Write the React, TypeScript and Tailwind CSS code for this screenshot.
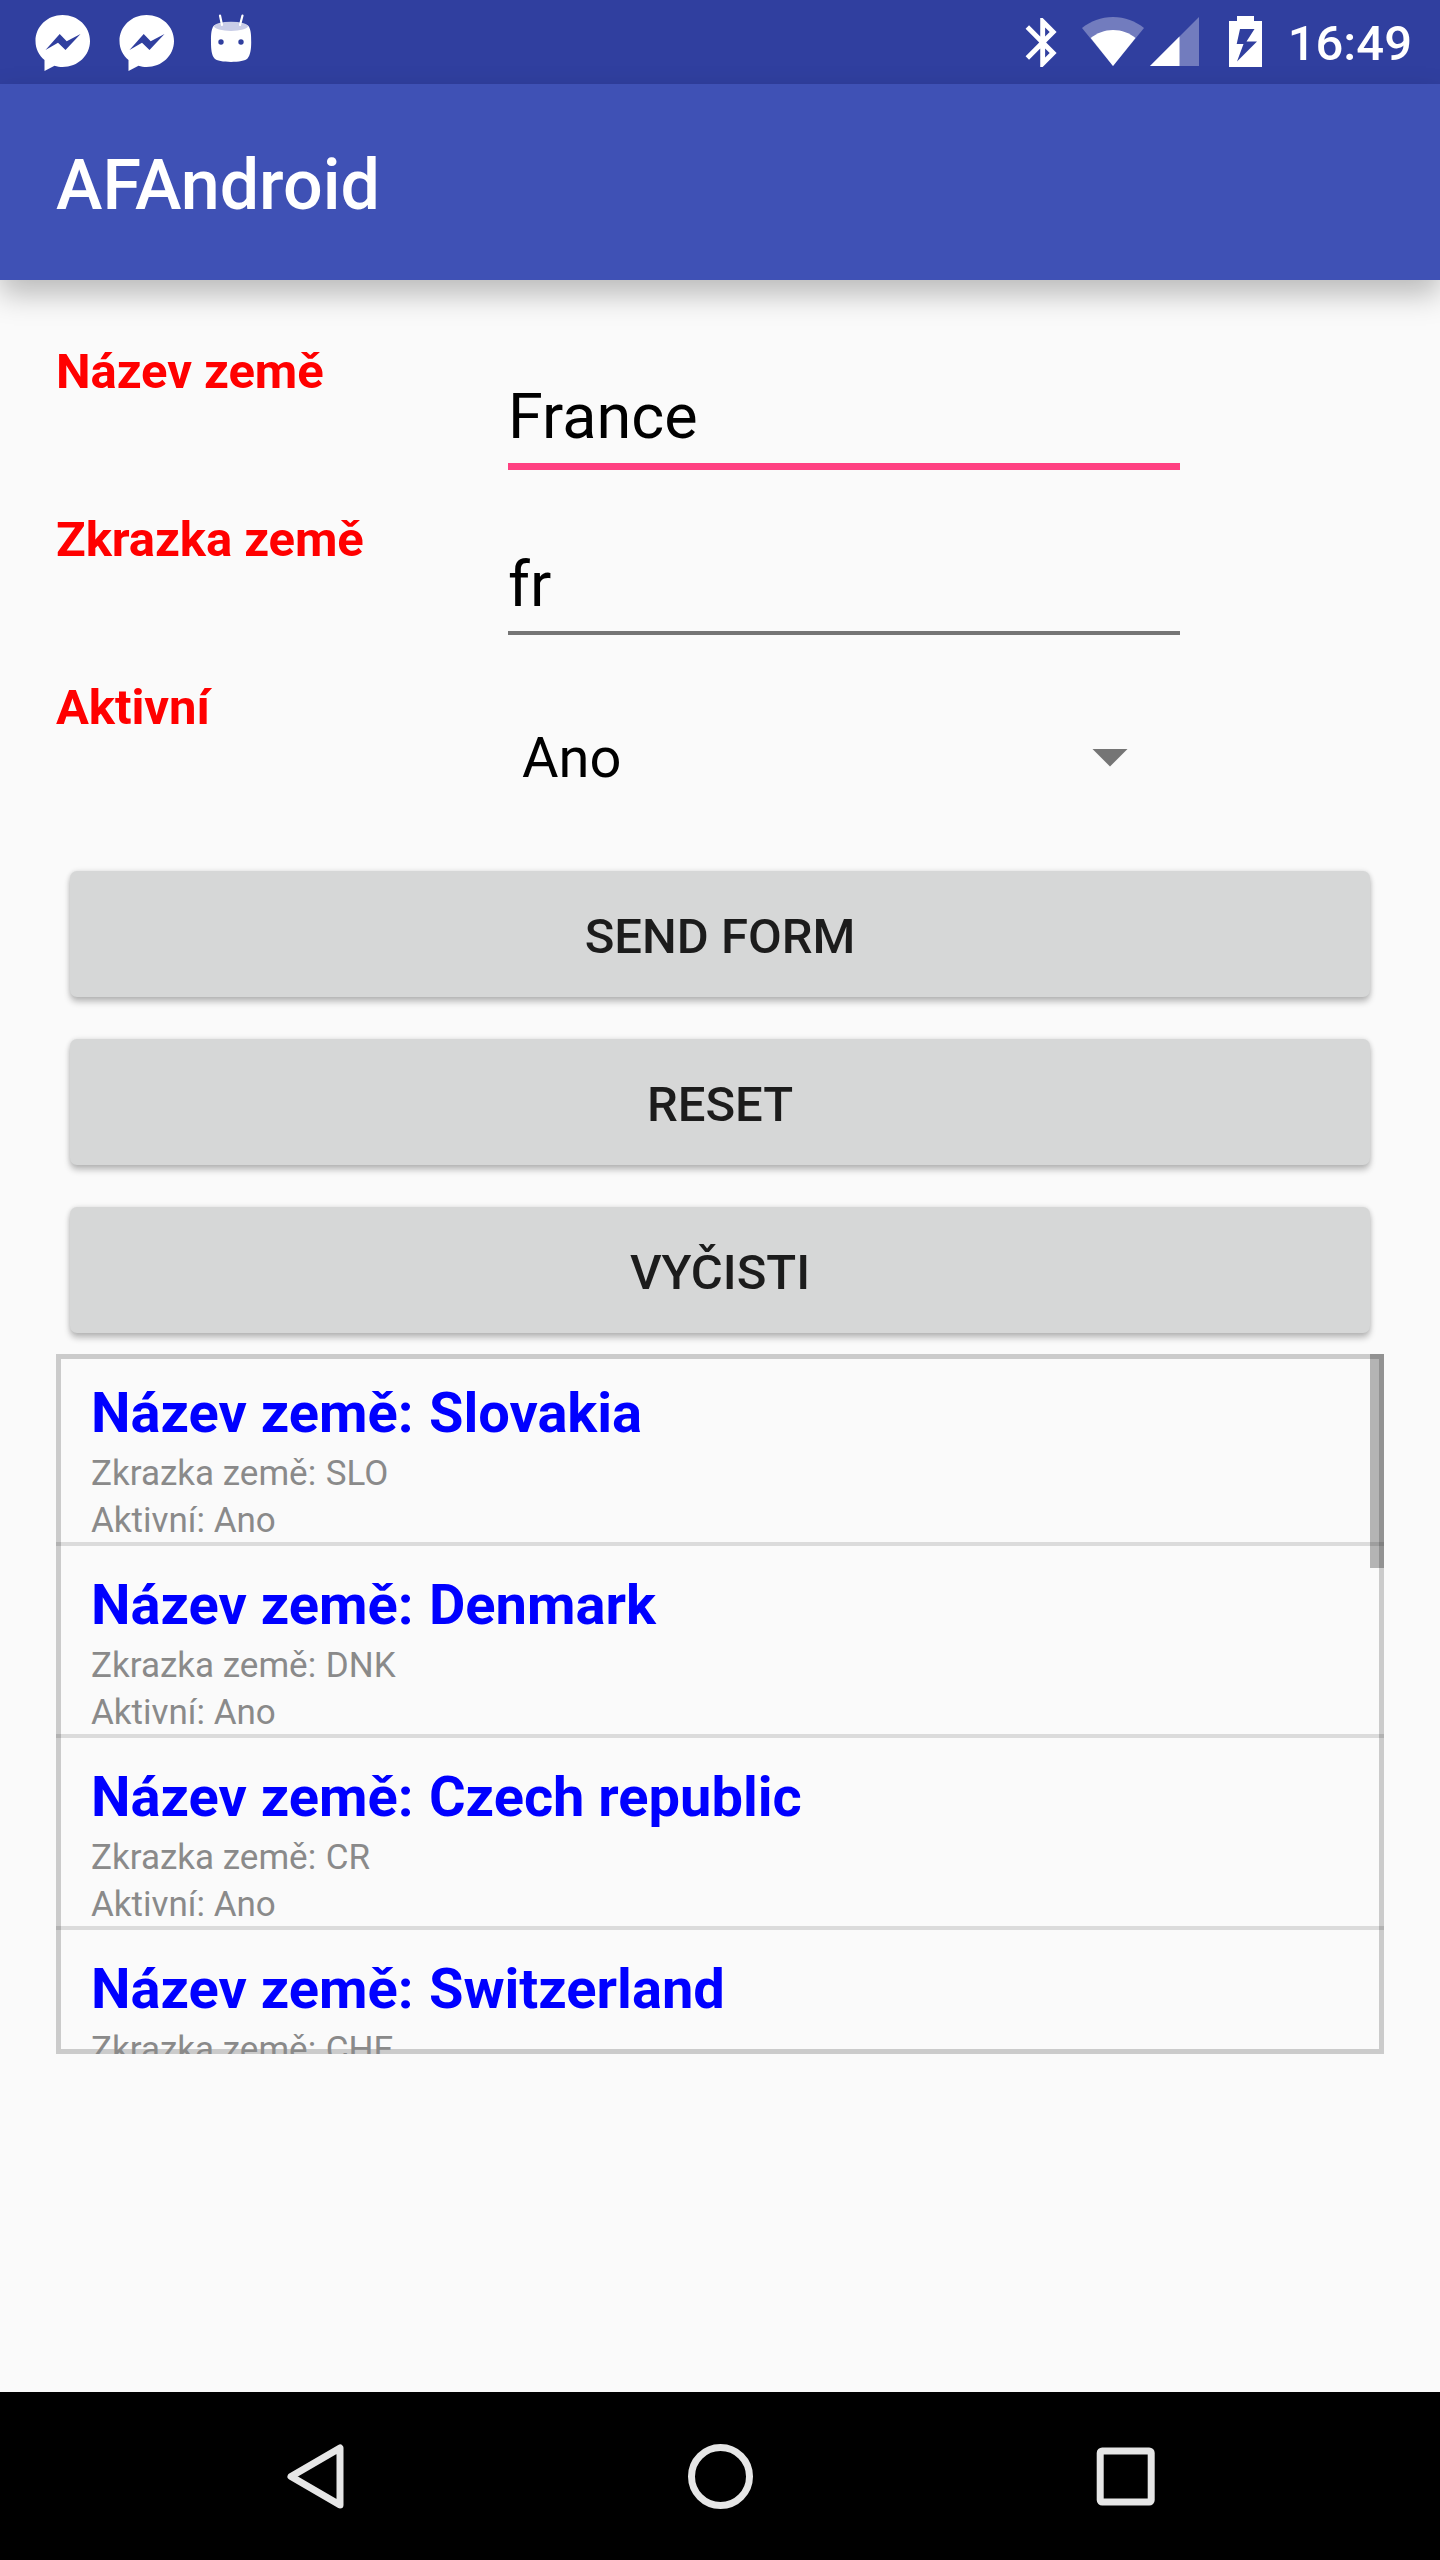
const countries = [
  { name: 'Slovakia', code: 'SLO', active: 'Ano' },
  { name: 'Denmark', code: 'DNK', active: 'Ano' },
  { name: 'Czech republic', code: 'CR', active: 'Ano' },
  { name: 'Switzerland', code: 'CHE' },
];

function MessengerIcon() {
  return (
    <svg width="84" height="84" viewBox="0 0 84 84" fill="white" fillRule="evenodd">
      <path d="M41.500 15C26.500 15 14.500 26.500 14.500 41C14.500 49 18 55.500 23.500 60V71L33.500 65.800C36 66.600 39 67 41.500 67C57 67 69 55.500 69 41C69 26.500 57 15 41.500 15ZM38.700 34L45.700 41.300L59.500 34L44.500 50L37 42.700L24.500 50Z" />
    </svg>
  );
}

function AndroidHeadIcon() {
  return (
    <svg width="84" height="84" viewBox="0 0 84 84">
      <path d="M24.500 26C28 22 56 22 59.500 26C62 30 62.200 35 62.200 42C62.200 49 61.500 55 58.500 58.500C55 63 29 63 25.500 58.500C22.500 55 22 49 22 42C22 35 22 30 24.500 26Z" fill="white" />
      <ellipse cx="42" cy="26.300" rx="16.800" ry="4.600" fill="#c9cde7" />
      <path d="M31 15.500L33 25M53.500 15.500L51 25" stroke="white" strokeWidth="2.200" strokeLinecap="round" />
      <circle cx="32" cy="42" r="2.700" fill="#303f9f" />
      <circle cx="52" cy="42" r="2.700" fill="#303f9f" />
    </svg>
  );
}

function StatusBar() {
  return (
    <div className="flex h-[84px] justify-between bg-[#303f9f]">
      <div className="flex pl-[21px]">
        <MessengerIcon />
        <MessengerIcon />
        <AndroidHeadIcon />
      </div>
      <div className="flex">
        <svg width="270" height="84" viewBox="0 0 270 84" fill="white">
          <path
            transform="translate(13.400 13.100) scale(2.440 2.450)"
            d="M17.710 7.710L12 2h-1v7.590L6.410 5 5 6.410 10.590 12 5 17.590 6.410 19 11 14.410V22h1l5.710-5.710-4.300-4.290 4.300-4.290zM13 5.830l1.880 1.880L13 9.590V5.830zm1.880 10.460L13 18.170v-3.760l1.880 1.880z"
          />
          <path d="M113 17C101 17 90.500 21.200 82 28L113 66L144 28C135.500 21.200 125 17 113 17Z" opacity="0.320" />
          <path d="M113 30C104.500 30 97 33 90.700 38L113 66L135.500 38C129.500 33 122 30 113 30Z" />
          <path d="M199 17V66H150Z" opacity="0.320" />
          <path d="M179.500 36.500V66H150Z" />
          <path fillRule="evenodd" d="M237 16H254V21H262V67H229V21H237ZM240 29L236.700 44H243.500L237 61.500L257 41.500H246.500L254.500 29Z" />
        </svg>
        <div className="w-[170px] pr-[28px] text-right text-[49px] leading-[88px] font-medium text-white">16:49</div>
      </div>
    </div>
  );
}

function Label({ children }: { children: string }) {
  return <div className="w-[444px] shrink-0 pt-[7px] text-[49px] leading-[58px] font-bold tracking-[-0.08px] text-[#ff0000]">{children}</div>;
}

function Button({ children }: { children: string }) {
  return (
    <button className="h-[126px] w-full rounded-[7px] bg-[#d6d7d7] pt-[5px] text-[49px] leading-[58px] font-medium text-[#1c1c1c] shadow-[0_5px_6px_rgba(0,0,0,0.24),0_0_5px_rgba(0,0,0,0.12)]">
      {children}
    </button>
  );
}

function NavBar() {
  return (
    <div className="flex h-[168px] items-center justify-center gap-[237px] bg-black">
      <svg width="168" height="168" viewBox="0 0 168 168" fill="none" stroke="#e6e6e6" strokeWidth="7" strokeLinejoin="round">
        <path d="M109 56V113L60 84.500Z" />
      </svg>
      <svg width="168" height="168" viewBox="0 0 168 168" fill="none" stroke="#e6e6e6" strokeWidth="7">
        <circle cx="84.500" cy="84.500" r="29" />
      </svg>
      <svg width="168" height="168" viewBox="0 0 168 168" fill="none" stroke="#e6e6e6" strokeWidth="7">
        <rect x="59.200" y="59" width="51" height="51" rx="2" />
      </svg>
    </div>
  );
}

export default function App() {
  return (
    <div className="flex h-[2560px] w-[1440px] flex-col overflow-hidden bg-[#fafafa] font-[Roboto,sans-serif]">
      <StatusBar />
      <header className="flex h-[196px] items-center bg-[#3f51b5] px-[56px] pt-[6px] text-[70px] font-medium text-white shadow-[0_14px_28px_rgba(0,0,0,0.26)]">
        AFAndroid
      </header>
      <main className="flex-1 px-[56px] pt-[56px]">
        <div className="flex h-[168px]">
          <Label>Název země</Label>
          <div className="mx-[8px] mt-[42px] h-[92px] w-[672px] border-b-[7px] border-[#ff4081] pt-[1px] text-[63px] leading-[76px] text-black">France</div>
        </div>
        <div className="flex h-[168px]">
          <Label>Zkrazka země</Label>
          <div className="mx-[8px] mt-[42px] h-[89px] w-[672px] border-b-[4px] border-[#757575] pt-[1px] text-[63px] leading-[76px] text-black">fr</div>
        </div>
        <div className="flex h-[178px]">
          <Label>Aktivní</Label>
          <div className="ml-[22px] flex h-[98px] w-[606px] justify-between pt-[53px]">
            <span className="text-[56px] leading-[66px] text-black">Ano</span>
            <svg className="mt-[24px]" width="36" height="18" viewBox="0 0 36 18" fill="#757575">
              <path d="M0.500 0H35.500L18 17.500Z" />
            </svg>
          </div>
        </div>
        <div className="flex flex-col gap-[42px] px-[14px] pt-[21px]">
          <Button>SEND FORM</Button>
          <Button>RESET</Button>
          <Button>VYČISTI</Button>
        </div>
        <div className="relative mt-[21px] h-[700px] overflow-hidden">
          <div className="absolute inset-0 border-[5px] border-black/19" />
          {countries.map((c) => (
            <div key={c.code} className="relative h-[192px] border-b-[4px] border-black/12 px-[35px] pt-[26px]">
              <div className="text-[56px] leading-[66px] font-bold text-[#0000ff]">
                Název země: <span className="ml-[1.5px]">{c.name}</span>
              </div>
              <div className="pt-[4px] text-[35px] leading-[47px] text-[#8a8a8a]">
                <div>
                  Zkrazka země: <span className="ml-px">{c.code}</span>
                </div>
                {c.active && <div>Aktivní: {c.active}</div>}
              </div>
            </div>
          ))}
          <div className="absolute top-0 right-0 h-[214px] w-[14px] bg-black/28" />
        </div>
      </main>
      <NavBar />
    </div>
  );
}
